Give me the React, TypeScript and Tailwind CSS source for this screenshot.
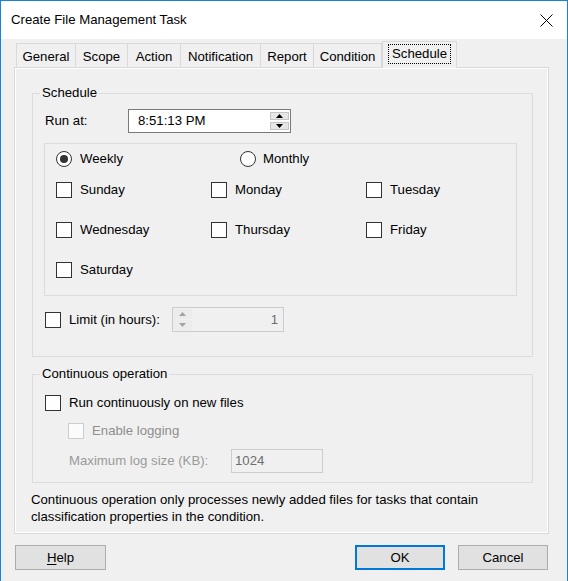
import React from "react";

const tabs = [
  { label: "General", w: "w-[60px]" },
  { label: "Scope", w: "w-[53px]" },
  { label: "Action", w: "w-[54px]" },
  { label: "Notification", w: "w-[81px]" },
  { label: "Report", w: "w-[54px]" },
  { label: "Condition", w: "w-[69px]" },
];

const days = ["Sunday", "Monday", "Tuesday", "Wednesday", "Thursday", "Friday", "Saturday"];

function Check({ disabled = false }: { disabled?: boolean }) {
  return (
    <span
      className={
        disabled
          ? "w-4 h-4 shrink-0 border border-[#cccccc] bg-[#fbfbfb]"
          : "w-4 h-4 shrink-0 border border-[#333333] bg-white"
      }
    />
  );
}

function Radio({ checked = false }: { checked?: boolean }) {
  return (
    <span className="w-4 h-4 shrink-0 rounded-full border border-[#333333] bg-white flex items-center justify-center">
      {checked && <span className="w-2 h-2 rounded-full bg-[#333333]" />}
    </span>
  );
}

function Arrow({ up, color }: { up: boolean; color: string }) {
  return (
    <svg width="7" height="4" viewBox="0 0 7 4">
      <polygon points={up ? "0,4 3.5,0 7,4" : "0,0 3.5,4 7,0"} fill={color} />
    </svg>
  );
}

export default function App() {
  return (
    <div className="w-[568px] h-[581px] bg-[#f0f0f0] border-x border-t border-[#1883d7] flex flex-col font-['Liberation_Sans',Arial,sans-serif] text-[13.2px] text-black overflow-hidden">
      {/* Title bar */}
      <div className="h-[38px] bg-white flex items-center shrink-0">
        <span className="ml-[10px]">Create File Management Task</span>
        <svg className="ml-auto mr-[14px]" width="13" height="13" viewBox="0 0 13 13">
          <path d="M0.5 0.5 L12.5 12.5 M12.5 0.5 L0.5 12.5" stroke="#000" strokeWidth="1" />
        </svg>
      </div>

      {/* Tabs */}
      <div className="mt-[2px] h-[26px] flex items-end pl-[15px]">
        {tabs.map((t) => (
          <div
            key={t.label}
            className={`${t.w} h-[24px] border border-b-0 border-[#d9d9d9] -ml-px first:ml-0 flex items-center justify-center pt-[2px] bg-[#f0f0f0]`}
          >
            {t.label}
          </div>
        ))}
        <div className="relative z-10 -mb-px w-[75px] h-[27px] border border-b-0 border-[#d9d9d9] bg-[#f0f0f0] flex items-start justify-center pt-[2px]">
          <span className="px-[3px] h-[20px] leading-[18px] border border-dotted border-black">Schedule</span>
        </div>
      </div>

      {/* Panel */}
      <div className="ml-[13px] w-[535px] h-[467px] border border-[#d9d9d9] shadow-[inset_0_0_0_1px_#ffffff] pt-[17px] flex flex-col">
        <fieldset className="ml-[17px] w-[501px] border border-[#dcdcdc] pb-[24px]">
          <legend className="ml-[7px] px-[2px] leading-[16px]">Schedule</legend>
          <div className="mt-[8px] ml-[12px] h-[24px] flex items-center">
            <span className="w-[83px]">Run at:</span>
            <div className="w-[163px] h-[24px] border border-[#7a7a7a] bg-white flex items-center">
              <span className="pl-[9px]">8:51:13 PM</span>
              <div className="ml-auto mr-[1px] w-[19px] flex flex-col gap-[2px]">
                <div className="h-[8px] bg-[#e6e6e6] border border-[#c4c4c4] flex items-center justify-center">
                  <Arrow up color="#000" />
                </div>
                <div className="h-[8px] bg-[#e6e6e6] border border-[#c4c4c4] flex items-center justify-center">
                  <Arrow up={false} color="#000" />
                </div>
              </div>
            </div>
          </div>

          <div className="mt-[10px] ml-[11px] w-[473px] h-[153px] border border-[#dcdcdc] pl-[11px] pt-[5px]">
            <div className="h-[20px] flex items-center">
              <div className="w-[184px] flex items-center gap-2">
                <Radio checked />
                <span>Weekly</span>
              </div>
              <div className="flex items-center gap-[7px]">
                <Radio />
                <span>Monthly</span>
              </div>
            </div>
            <div className="mt-[11px] grid grid-cols-[155px_155px_155px] gap-y-[20px]">
              {days.map((d) => (
                <div key={d} className="h-[20px] flex items-center gap-2">
                  <Check />
                  <span>{d}</span>
                </div>
              ))}
            </div>
          </div>

          <div className="mt-[11px] ml-[12px] h-[25px] flex items-center">
            <Check />
            <span className="ml-2 w-[103px]">Limit (in hours):</span>
            <div className="w-[112px] h-[25px] border border-[#cccccc] bg-[#f0f0f0] flex items-center">
              <div className="w-[19px] h-full flex flex-col py-[1px] gap-[1px]">
                <div className="flex-1 flex items-center justify-center bg-[#ececec]">
                  <Arrow up color="#a3a3a3" />
                </div>
                <div className="flex-1 flex items-center justify-center bg-[#ececec]">
                  <Arrow up={false} color="#a3a3a3" />
                </div>
              </div>
              <span className="ml-auto pr-[5px] text-[#6d6d6d]">1</span>
            </div>
          </div>
        </fieldset>

        <fieldset className="mt-[9px] ml-[17px] w-[501px] border border-[#dcdcdc] pb-[9px]">
          <legend className="ml-[7px] px-[2px] leading-[16px]">Continuous operation</legend>
          <div className="mt-[11px] ml-[12px] h-[20px] flex items-center gap-2">
            <Check />
            <span>Run continuously on new files</span>
          </div>
          <div className="mt-[8px] ml-[35px] h-[20px] flex items-center gap-2">
            <Check disabled />
            <span className="text-[#8f8f8f]">Enable logging</span>
          </div>
          <div className="mt-[8px] ml-[36px] h-[24px] flex items-center">
            <span className="w-[162px] text-[#9a9a9a]">Maximum log size (KB):</span>
            <div className="w-[92px] h-[24px] border border-[#cccccc] bg-[#f0f0f0] flex items-center pl-[3px] text-[#6d6d6d]">
              1024
            </div>
          </div>
        </fieldset>

        <p className="mt-[8px] ml-[16px] leading-[17px]">
          Continuous operation only processes newly added files for tasks that contain
          <br />
          classification properties in the condition.
        </p>
      </div>

      {/* Buttons */}
      <div className="mt-[11px] h-[25px] flex items-center">
        <button className="ml-[14px] w-[91px] h-[25px] bg-[#e1e1e1] border border-[#adadad]">
          <span className="underline underline-offset-2">H</span>elp
        </button>
        <button className="ml-auto w-[90px] h-[25px] bg-[#e1e1e1] border-2 border-[#0078d7]">OK</button>
        <button className="ml-[13px] mr-[19px] w-[90px] h-[25px] bg-[#e1e1e1] border border-[#adadad]">
          Cancel
        </button>
      </div>
    </div>
  );
}
